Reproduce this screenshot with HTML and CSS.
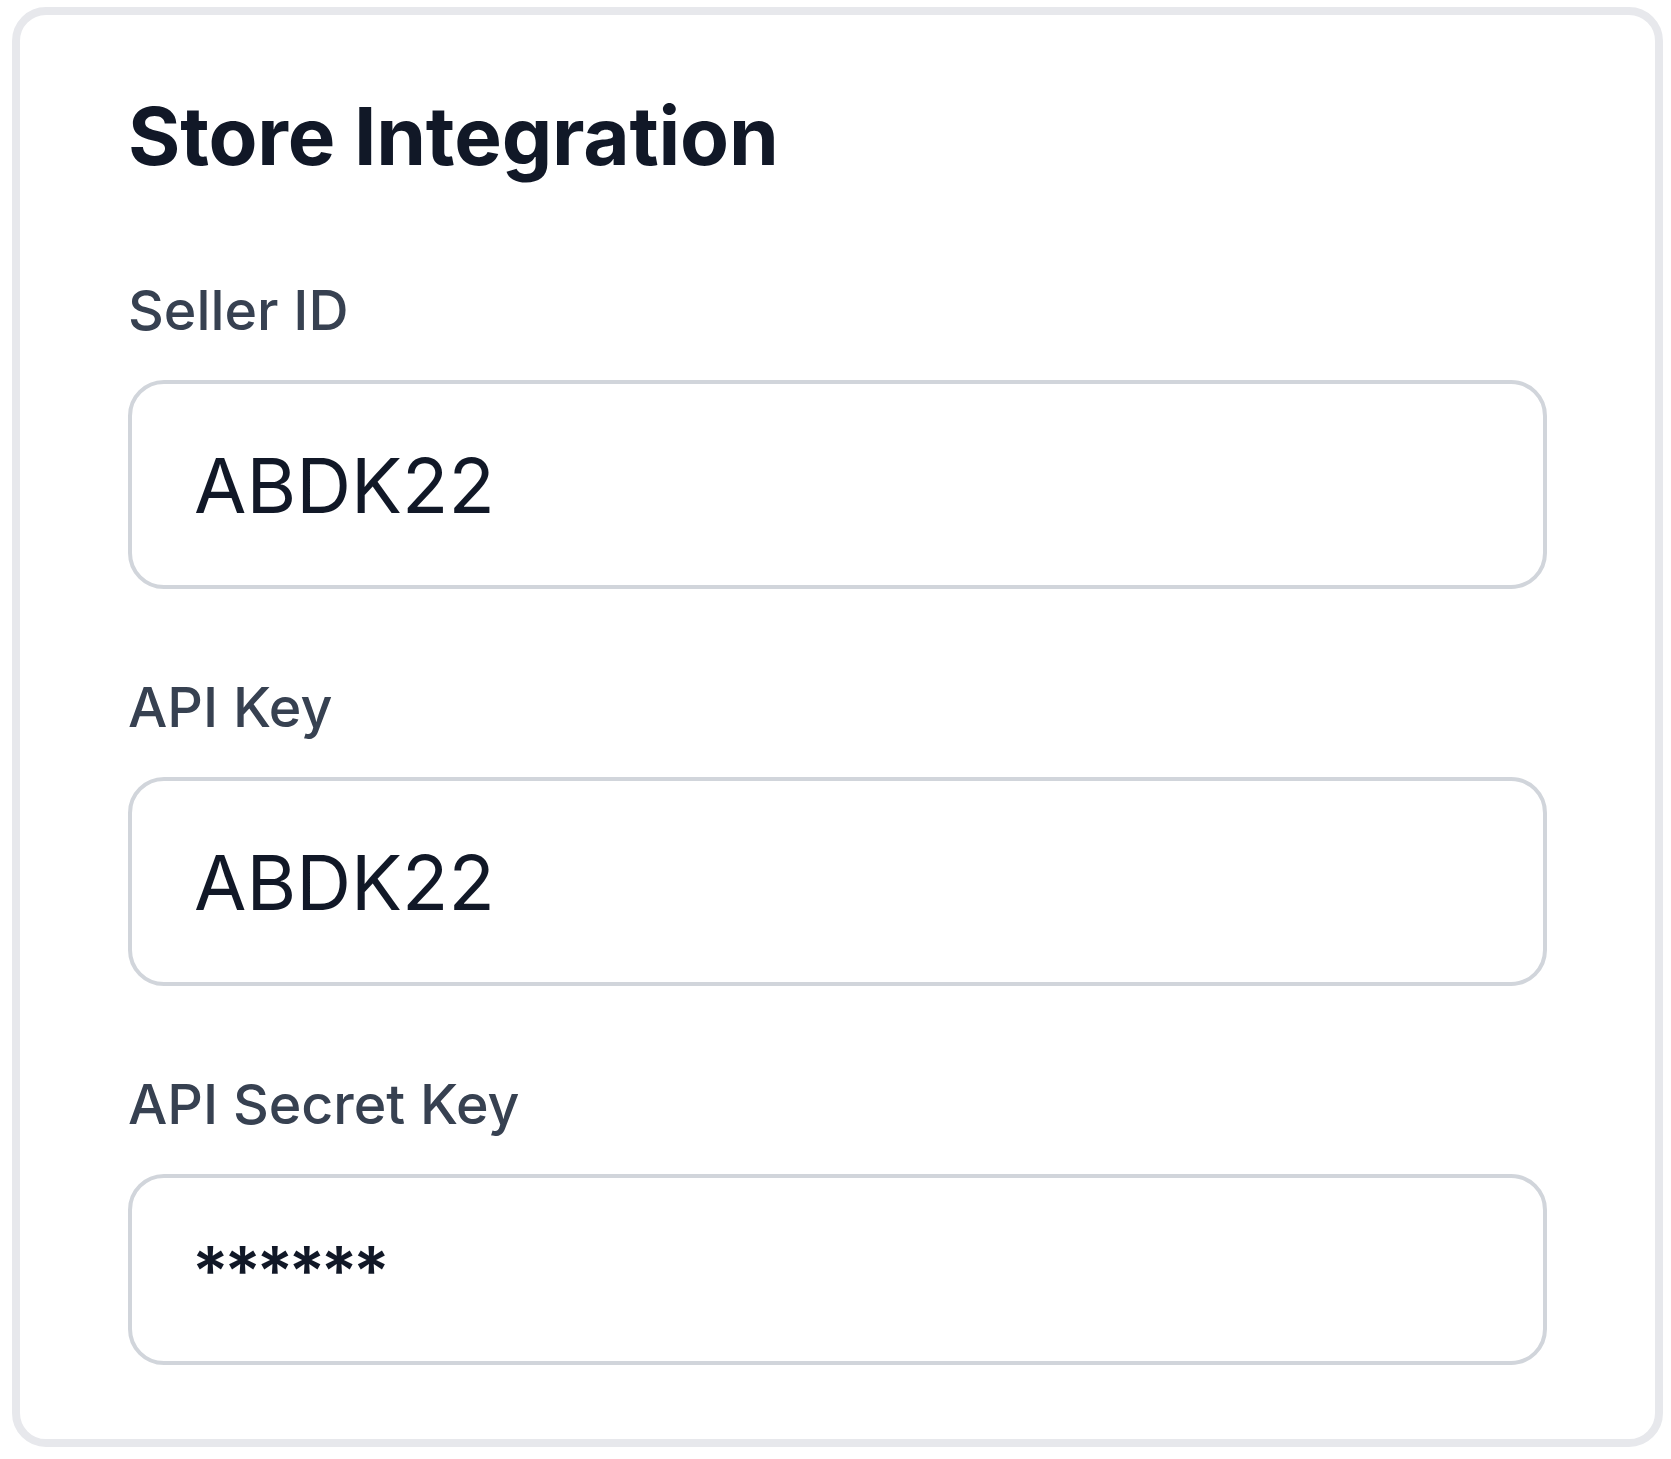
FILE: index.html
```html
<!DOCTYPE html>
<html lang="en">
<head>
  <meta charset="UTF-8">
  <meta name="viewport" content="width=device-width, initial-scale=1.0">
  <title>Store Integration</title>
  <link rel="stylesheet" href="styles.css">
</head>
<body>
  <!-- Store integration card -->
  <div class="card">
    <h1 class="card-title">Store Integration</h1>

    <div class="field">
      <label for="seller-id">Seller ID</label>
      <input type="text" id="seller-id" value="ABDK22" readonly>
    </div>

    <div class="field">
      <label for="api-key">API Key</label>
      <input type="text" id="api-key" value="ABDK22" readonly>
    </div>

    <div class="field">
      <label for="api-secret">API Secret Key</label>
      <input type="text" id="api-secret" class="secret" value="******" readonly>
    </div>
  </div>
</body>
</html>
```

FILE: styles.css
```css
body {
  margin: 7px 8px 14px 12px;
  font-family: Inter, "Noto Sans", sans-serif;
  background: #fff;
}
.card {
  border: 8px solid #e7e8ec;
  border-radius: 34px;
  padding: 65px 108px 74px 108px;
  background: #fff;
}
.card-title {
  margin: 0 0 80px 0;
  font-size: 80px;
  line-height: 112px;
  font-weight: 700;
  letter-spacing: -0.2px;
  color: #111827;
}
.field {
  display: flex;
  flex-direction: column;
  margin-bottom: 80px;
}
.field:last-child {
  margin-bottom: 0;
}
.field label {
  font-size: 55.5px;
  line-height: 76px;
  font-weight: 500;
  color: #374151;
  margin-bottom: 32px;
}
.field input {
  box-sizing: border-box;
  height: 209px;
  padding: 0 62px;
  border: 4px solid #d1d5db;
  border-radius: 36px;
  font-family: Inter, "Noto Sans", sans-serif;
  font-size: 76px;
  color: #111827;
  background: #fff;
  outline: none;
}
.field input.secret {
  height: 191px;
  padding-left: 60px;
  font-size: 68px;
  font-weight: 600;
  letter-spacing: -4.5px;
}
```
